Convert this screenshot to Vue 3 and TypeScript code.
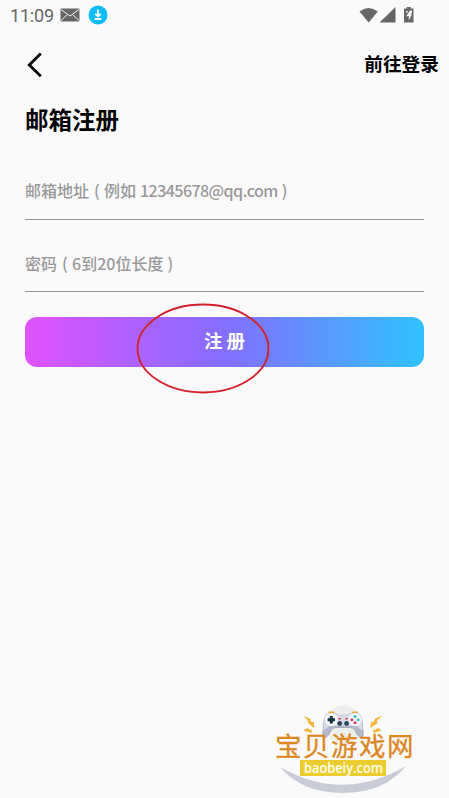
<script setup lang="ts">
interface Part { text: string; kind: string }
interface Field { id: string; parts: Part[] }

const fields: Field[] = [
  {
    id: 'email',
    parts: [
      { text: '邮箱地址', kind: 'han' },
      { text: '(', kind: 'open' },
      { text: '例如', kind: 'han' },
      { text: '12345678@qq.com', kind: 'address' },
      { text: ')', kind: 'close' },
    ],
  },
  {
    id: 'password',
    parts: [
      { text: '密码', kind: 'han' },
      { text: '(', kind: 'open' },
      { text: '6', kind: 'latin' },
      { text: '到', kind: 'han' },
      { text: '20', kind: 'latin' },
      { text: '位长度', kind: 'han' },
      { text: ')', kind: 'close' },
    ],
  },
]
</script>

<template>
  <main class="screen">
    <div class="status">
      <span class="clock">11:09</span>
      <svg class="mail" width="20" height="14" viewBox="0 0 20 14">
        <rect x="0.5" y="0.5" width="19" height="13" rx="0.8" fill="#666" />
        <path d="M1 1.500 10 8l9-6.500M1 12.500l6.500-6M19 12.500l-6.500-6" fill="none" stroke="#f4f4f4" stroke-width="1" />
      </svg>
      <svg class="download" width="20" height="20" viewBox="0 0 20 20">
        <circle cx="10" cy="10" r="9.500" fill="#0dbcfb" />
        <path d="M10 4.500v7M7.300 8.800 10 11.500l2.700-2.700M6.500 14h7" fill="none" stroke="#fff" stroke-width="1.800" />
      </svg>
      <svg class="signals" width="56" height="17" viewBox="0 0 56 17">
        <path d="M0.500 4.500Q9.500-2.500 18.800 4.500L9.700 15.500Z" fill="#666" />
        <path d="M20.500 15.500 36.500 0v15.500Z" fill="#666" />
        <path d="M45 1.500h2.700V0h4.100v1.500H54.500V15.500h-9.500Z" fill="#666" />
        <path d="M47 4h1.700v1.500H47ZM51 3.500h2v2.500l-1.200 1.500h1.200L49.800 13.500V9.300H47.300L49.500 5.500Z" fill="#f2f2f2" />
      </svg>
    </div>

    <nav class="nav">
      <button class="back" type="button" aria-label="返回">
        <svg width="16" height="26" viewBox="0 0 16 26">
          <path d="M14.800 1.500 3.300 13l11.500 11.300" fill="none" stroke="#000" stroke-width="2.800" />
        </svg>
      </button>
      <a class="login">前往登录</a>
    </nav>

    <h1 class="title">邮箱注册</h1>

    <form class="form" @submit.prevent>
      <label v-for="field in fields" :key="field.id" class="field" :class="field.id">
        <span v-for="(part, i) in field.parts" :key="i" :class="part.kind">{{ part.text }}</span>
      </label>
      <button class="submit" type="submit">注 册</button>
    </form>

    <svg class="ring" width="136" height="92" viewBox="0 0 136 92">
      <ellipse cx="68" cy="45.500" rx="65.500" ry="44" fill="none" stroke="#d3202b" stroke-width="1.800" />
    </svg>

    <svg class="brand" width="150" height="98" viewBox="270 700 150 98">
      <circle cx="343.500" cy="725" r="19.500" fill="#eeeeec" />
      <path d="M280 767Q343 803 406 766Q384 793 343 793Q302 793 280 767Z" fill="#c9cbd8" />
      <path d="M324.500 720L322.800 732Q322.500 739 326 737.500Q328.500 736 330.500 731.500Q332 727.500 336 727.500H350Q354 727.500 355.500 731.500Q357.500 736 360 737.500Q363.500 739 363.200 732L361.500 720Z" fill="#b4b8c8" stroke="#8d93a8" stroke-width="0.600" />
      <path d="M331 712.500Q336 712.500 338.500 715H347.500Q350 712.500 355 712.500Q362 713 362 721L363 731Q359 729.500 357 726Q354 725.500 350 726H336Q332 725.500 329 726Q327 729.500 323 731L324 721Q324 713 331 712.500Z" fill="#d9dce7" stroke="#a3a8ba" stroke-width="0.400" />
      <path d="M328.500 712.300h5.500M352 712.300h5.500" stroke="#e6a936" stroke-width="1.500" />
      <circle cx="331.300" cy="719.700" r="6.500" fill="#f5f6fa" />
      <path d="M331.300 716v7.400M327.600 719.700h7.400" stroke="#173344" stroke-width="3" />
      <circle cx="355" cy="719.700" r="6.500" fill="#f5f6fa" />
      <g fill="#da3c55"><circle cx="351.900" cy="719.700" r="1.500" /><circle cx="355" cy="722.800" r="1.500" /><rect x="338.300" y="718" width="2.500" height="1.500" /><rect x="345.300" y="718" width="2.500" height="1.500" /></g>
      <g fill="#38b5cb"><circle cx="355" cy="716.600" r="1.500" /><circle cx="358.100" cy="719.700" r="1.500" /></g>
      <circle cx="339.700" cy="723.500" r="2.400" fill="#2b4a59" />
      <circle cx="346.600" cy="723.500" r="2.400" fill="#2b4a59" />
      <g fill="#f5b52c" stroke="#f0a82a" stroke-width="0.600">
        <path d="M304.500 717l5.500 2 .5 3 3 .5.5 5-6-5 .5-2Z" />
        <path d="M381 716.500l-6 2.500-.5 3-3 .5-1 5 6.500-4.500-.5-2.500Z" />
        <path d="M304 730l4-1.500 1.500 2 2-.5-.500 2.500-3-1Z" />
        <path d="M381 730l-4-1.500-1.500 2-2-.5.500 2.500 3-1Z" />
      </g>
      <text class="brand-name" x="275" y="756">宝贝游戏网</text>
      <rect x="300" y="760" width="86" height="16" fill="#ebcd2f" />
      <text class="brand-url" x="304" y="772.500" textLength="79" lengthAdjust="spacingAndGlyphs">baobeiy.com</text>
    </svg>
  </main>
</template>

<style>
body { background: #fafafa; }
</style>

<style scoped>
.screen {
  position: relative;
  box-sizing: border-box;
  width: 449px;
  height: 798px;
  overflow: hidden;
  background: #fafafa;
  font-family: "Noto Sans CJK SC", sans-serif;
  color: #000;
}
.status {
  display: flex;
  align-items: center;
  height: 30px;
  padding: 0 34px 0 10px;
}
.clock {
  width: 50px;
  padding-top: 1px;
  font: 18px/30px Roboto, sans-serif;
  letter-spacing: -0.2px;
  color: #666;
}
.mail { margin-bottom: 1px; }
.download { margin-left: 8px; }
.signals { margin-left: auto; }
.nav {
  display: flex;
  align-items: center;
  justify-content: space-between;
  height: 68px;
  padding: 0 10px 0 26px;
}
.back {
  display: flex;
  padding: 2px 0 0;
  border: 0;
  background: none;
}
.login {
  padding-bottom: 3px;
  font-size: 18.700px;
  line-height: 28px;
  font-weight: 700;
}
.title {
  margin: 0;
  padding: 3px 25px 0;
  font-size: 23.500px;
  line-height: 36px;
  font-weight: 700;
}
.form { padding: 28px 25px 0; }
.field {
  display: flex;
  box-sizing: border-box;
  height: 55px;
  margin-bottom: 18px;
  padding-top: 10px;
  border-bottom: 1px solid #999;
  color: #999;
  font-size: 16px;
  line-height: 30px;
  font-weight: 500;
  white-space: nowrap;
}
.password {
  height: 54px;
  margin-bottom: 25px;
}
.open { width: 10px; padding-left: 5px; }
.address { padding-left: 4px; letter-spacing: -0.550px; }
.close { padding-left: 4px; }
.submit {
  display: block;
  width: 399px;
  height: 50px;
  padding: 0 0 4px;
  border: 0;
  border-radius: 12px;
  background: linear-gradient(90deg, #e052ff, #846efd 50%, #2fc2ff);
  color: #fff;
  font: 700 18.500px/46px "Noto Sans CJK SC", sans-serif;
}
.ring {
  position: absolute;
  left: 135px;
  top: 303px;
}
.brand {
  position: absolute;
  left: 270px;
  top: 700px;
}
.brand-name {
  font: 400 26.500px "Noto Sans CJK SC", sans-serif;
  letter-spacing: 1.500px;
  fill: #dd861f;
  stroke: #dd861f;
  stroke-width: 0.300px;
}
.brand-url {
  font: 600 14.500px "Open Sans", sans-serif;
  fill: #fffef0;
}
</style>
